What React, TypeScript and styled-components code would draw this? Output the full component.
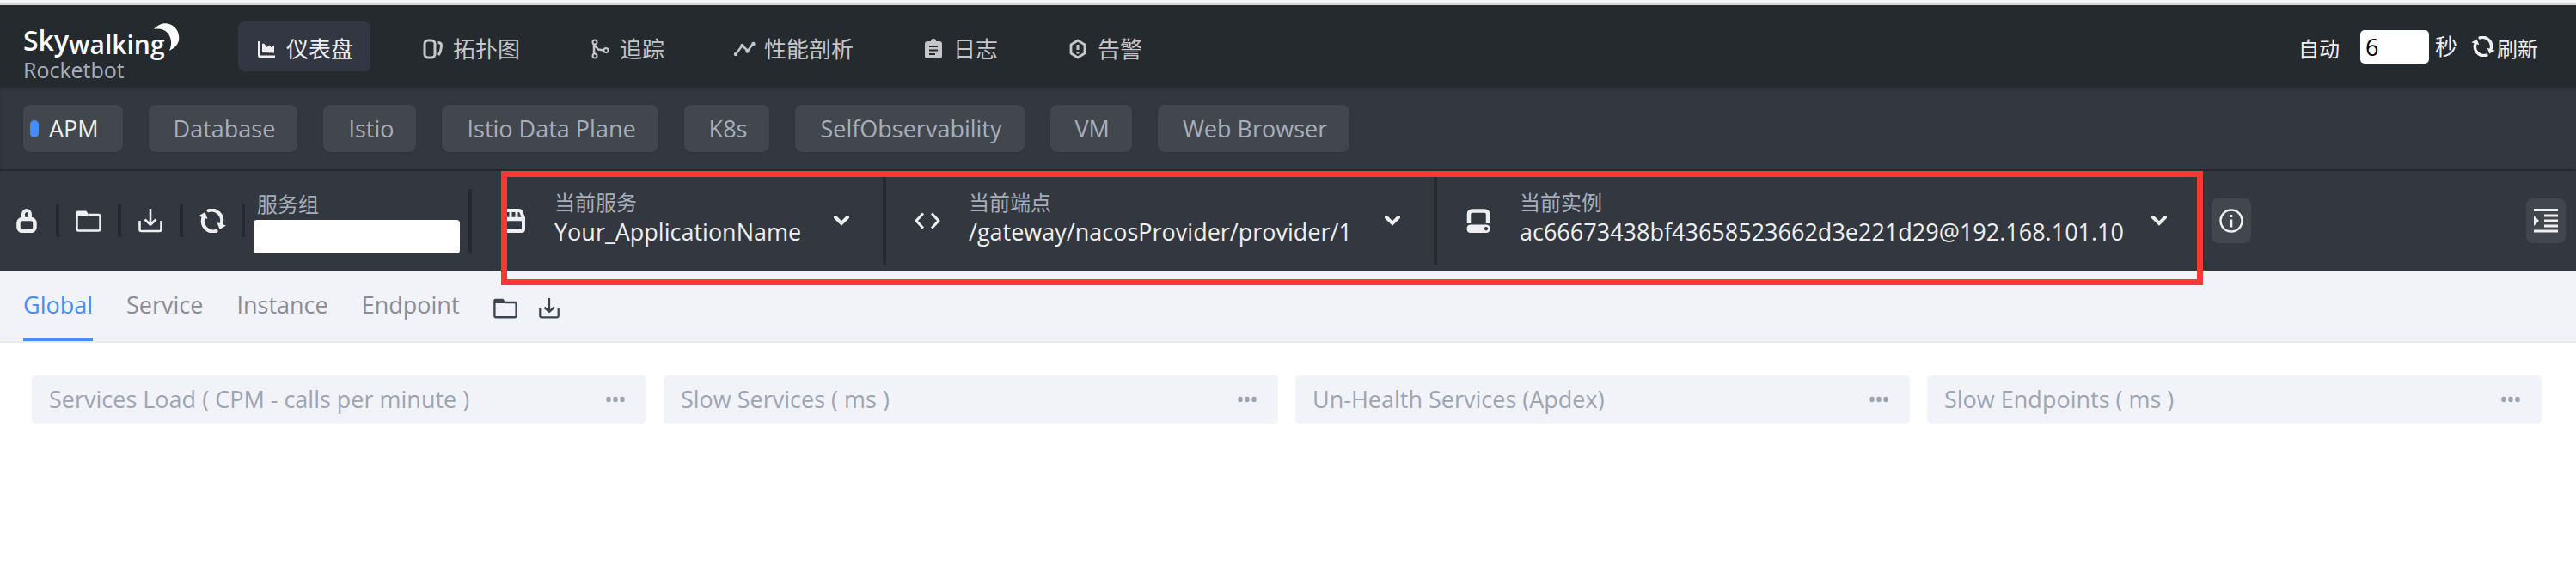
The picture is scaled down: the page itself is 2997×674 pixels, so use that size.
import React from 'react';
import styled, { createGlobalStyle } from 'styled-components';

const GlobalStyle = createGlobalStyle`
  *, *::before, *::after { box-sizing: border-box; }
  body {
    margin: 0;
    background: #fff;
    font-family: 'Open Sans', 'Noto Sans CJK SC', sans-serif;
    font-size: 27px;
    line-height: 36px;
  }
  button, input, select { font: inherit; color: inherit; }
  button { cursor: pointer; }
  svg { display: block; flex: none; }
`;

const Page = styled.div`
  display: flex;
  flex-direction: column;
`;

const BrowserEdge = styled.div`
  height: 6px;
  background: #f5f5f5;
  border-bottom: 2px solid #d3d8d7;
`;

const Header = styled.header`
  display: flex;
  align-items: center;
  height: 96px;
  padding: 0 44px 0 27px;
  background: #252a2f;
  color: #efeff1;
`;

const Brand = styled.a`
  position: relative;
  width: 250px;
  height: 78px;
  padding-top: 10px;
  color: #a7aebb;
  text-decoration: none;
`;

const LogoWord = styled.div`
  display: flex;
  align-items: flex-start;
  height: 44px;
  line-height: 44px;
  font-weight: 600;
  color: #fff;
`;

const LogoBig = styled.span`
  font-size: 32px;
`;

const LogoSmall = styled.span`
  padding-top: 5px;
  font-size: 30px;
`;

const Moon = styled.svg`
  position: absolute;
  left: 152px;
  top: 12px;
`;

const Product = styled.div`
  font-size: 25px;
  line-height: 24px;
`;

const Nav = styled.nav`
  display: flex;
  gap: 40px;
  margin-right: auto;
`;

const NavLink = styled.a<{ $active?: boolean }>`
  display: flex;
  align-items: center;
  gap: 10px;
  height: 58px;
  padding: 5px 20px 0;
  border-radius: 8px;
  background: ${(p) => (p.$active ? '#333743' : 'transparent')};
  color: ${(p) => (p.$active ? '#efeff1' : '#c5c6c8')};
  font-size: 26px;
  text-decoration: none;
  white-space: nowrap;
`;

const AutoLabel = styled.label`
  padding-top: 5px;
  margin-right: 24px;
  font-size: 24px;
`;

const SecondsInput = styled.input`
  width: 80px;
  height: 39px;
  padding: 0 6px;
  border: 0;
  border-radius: 5px;
  background: #fff;
  color: #000;
`;

const Unit = styled.span`
  margin: 0 16px 0 7px;
  font-size: 26px;
`;

const ReloadButton = styled.button`
  display: flex;
  align-items: center;
  gap: 2px;
  padding: 0;
  border: 0;
  background: none;
  font-size: 24px;
`;

const ReloadText = styled.span`
  padding-top: 5px;
`;

const GroupBar = styled.div`
  display: flex;
  align-items: center;
  gap: 30px;
  height: 97px;
  padding: 0 27px;
  background: #333840;
  border-bottom: 2px solid #252a2f;
  box-shadow: inset 0 3px 3px rgba(0, 0, 0, 0.1);
`;

const GroupButton = styled.button<{ $active?: boolean }>`
  display: flex;
  align-items: center;
  gap: 12px;
  height: 55px;
  padding: ${(p) => (p.$active ? '0 28px 0 8px' : '0 26px 0 29px')};
  border: 0;
  border-radius: 8px;
  background: #42464d;
  box-shadow: 0 1px 2px rgba(0, 0, 0, 0.12);
  color: ${(p) => (p.$active ? '#efeff1' : '#a7aebb')};
  white-space: nowrap;
`;

const ActiveMark = styled.span`
  width: 10px;
  height: 20px;
  border-radius: 5px;
  background: #448dfe;
`;

const ToolBar = styled.section`
  position: relative;
  display: flex;
  align-items: center;
  height: 116px;
  padding-right: 12px;
  background: #333840;
  color: #efeff1;
`;

const ToolButton = styled.button`
  display: flex;
  align-items: center;
  justify-content: center;
  height: 38px;
  width: 72px;
  padding: 0;
  border: 0;
  border-right: 4px solid #252a2f;
  background: none;

  &:first-child { width: 69px; padding-right: 4px; }
`;

const GroupField = styled.div`
  display: flex;
  flex-direction: column;
  width: 264px;
  height: 75px;
  padding: 0 10px;
  border-right: 4px solid #252a2f;
`;

const Caption = styled.label`
  padding-left: 4px;
  font-size: 24px;
  line-height: 36px;
  color: #a7aebb;
`;

const GroupInput = styled.input`
  width: 240px;
  height: 39px;
  border: 0;
  border-radius: 4px;
  background: #fff;
  color: #333840;
`;

const Selectors = styled.div`
  position: relative;
  display: flex;
  height: 103px;
`;

const Highlight = styled.div`
  position: absolute;
  left: 34px;
  right: 1px;
  top: -7px;
  bottom: -23px;
  border: 7px solid #fd3736;
  pointer-events: none;
`;

const Selector = styled.div<{ $width: number }>`
  display: flex;
  align-items: center;
  width: ${(p) => p.$width}px;
  padding: 0 39px 0 32px;
  border-right: 4px solid #252a2f;
`;

const SelectorBody = styled.div`
  display: flex;
  flex: 1;
  flex-direction: column;
  min-width: 0;
  margin-left: 32px;
  margin-bottom: 4px;
`;

const SelectorCaption = styled.label`
  font-size: 24px;
  line-height: 30px;
  color: #a7aebb;
`;

const SelectorValue = styled.select`
  appearance: none;
  height: 38px;
  padding: 0;
  border: 0;
  background: none;
  line-height: 38px;
`;

const SquareButton = styled.button`
  display: flex;
  align-items: center;
  justify-content: center;
  width: 46px;
  height: 52px;
  padding: 0;
  border: 0;
  border-radius: 8px;
  background: #42464d;
`;

const InfoSlot = styled.div`
  padding-left: 9px;
  margin-right: auto;
`;

const TabBar = styled.nav`
  display: flex;
  align-items: center;
  gap: 39px;
  height: 84px;
  padding: 0 27px;
  background: #f2f3f9;
  border-bottom: 2px solid #e9eaed;
`;

const Tab = styled.a<{ $active?: boolean }>`
  display: flex;
  align-items: center;
  height: 82px;
  padding-top: 2px;
  border-bottom: 4px solid ${(p) => (p.$active ? '#448dfe' : 'transparent')};
  color: ${(p) => (p.$active ? '#448dfe' : '#8b8d93')};
  text-decoration: none;
`;

const TabTools = styled.div`
  display: flex;
  gap: 24px;
  padding-top: 6px;
`;

const PlainButton = styled.button`
  display: flex;
  padding: 0;
  border: 0;
  background: none;
  color: #3d444f;
`;

const Board = styled.main`
  display: grid;
  grid-template-columns: repeat(4, 1fr);
  gap: 20px;
  padding: 38px 40px 38px 37px;
`;

const Card = styled.article`
  display: flex;
  align-items: center;
  justify-content: space-between;
  height: 56px;
  padding: 0 24px 0 20px;
  border-radius: 5px;
  background: #f2f3f9;
  color: #9da5b2;
`;

const CardTitle = styled.h2`
  margin: 0;
  font-size: 27px;
  font-weight: 400;
`;

const CardMenu = styled(PlainButton)`
  color: #9da5b2;
`;

const Icon = ({
  w = 28,
  h = 28,
  box = '0 0 28 28',
  children,
}: {
  w?: number;
  h?: number;
  box?: string;
  children: React.ReactNode;
}) => (
  <svg
    width={w}
    height={h}
    viewBox={box}
    fill="none"
    stroke="currentColor"
    strokeWidth={3}
    strokeLinejoin="round"
    aria-hidden="true"
  >
    {children}
  </svg>
);

const DashboardIcon = () => (
  <Icon w={26} h={26} box="0 0 26 26">
    <path d="M4.500 4v16.500q0 1.500 1.500 1.500h17" />
    <path d="M8 17V7l2-.5 3.500 4.500 3-2.500 2.500 3 2.500-3 .5.5v8.500z" fill="currentColor" stroke="none" />
  </Icon>
);
const TopologyIcon = () => (
  <Icon w={26} h={26} box="0 0 26 26">
    <rect x="3" y="3" width="12" height="20" rx="4" />
    <path d="M18.500 5.500q4 0 4 3-.3 8-3.500 11.500" />
  </Icon>
);
const TraceIcon = () => (
  <Icon w={26} h={26} box="0 0 26 26">
    <g strokeWidth="2">
      <circle cx="7" cy="5" r="2.500" />
      <circle cx="7" cy="21" r="2.500" />
      <circle cx="20" cy="14.500" r="2.500" />
    </g>
    <path d="M6 7.500V18.500M6 8l5 5.500 6.500 1" strokeWidth="2.500" />
  </Icon>
);
const ProfileIcon = () => (
  <Icon w={26} h={26} box="0 0 26 26">
    <path d="M3 19l7.500-10 6.500 6L23 7" strokeWidth="2.500" />
    <g fill="currentColor" stroke="none">
      <circle cx="3" cy="19" r="2.200" />
      <circle cx="10.500" cy="9" r="2.200" />
      <circle cx="16.500" cy="15.500" r="2.200" />
      <circle cx="23.500" cy="7" r="2.200" />
    </g>
  </Icon>
);
const LogIcon = () => (
  <Icon w={26} h={26} box="0 0 26 26">
    <path
      d="M6 4h4a3 3 0 0 1 6 0h4q3 0 3 3v14q0 3-3 3H6q-3 0-3-3V7q0-3 3-3zM8 9v2h10V9zm0 4.500v2h10v-2zM8 18v2h7v-2z"
      fill="currentColor"
      fillRule="evenodd"
      stroke="none"
    />
  </Icon>
);
const AlarmIcon = () => (
  <Icon w={26} h={26} box="0 0 26 26">
    <path d="M13 3l8 5v10l-8 5-8-5V8z" strokeWidth="2.800" />
    <path d="M13 8v6M13 16v2.500" />
  </Icon>
);
const RefreshIcon = ({ w = 32, h = 28 }: { w?: number; h?: number }) => (
  <svg width={w} height={h} viewBox="0 0 32 28" fill="currentColor" aria-hidden="true">
    <path
      d="M11.500 2.200A12 12 0 0 1 26.500 17.500M20.500 25.800A12 12 0 0 1 5.500 10.500"
      fill="none"
      stroke="currentColor"
      strokeWidth="4"
      strokeLinecap="round"
    />
    <path d="M21.500 16l10.500 3.500-7.500 4.500zM10.500 12L0 8.500 7.500 4z" />
  </svg>
);
const LockIcon = () => (
  <Icon w={24} box="0 0 24 28">
    <path d="M8 12V6.500a4 4.500 0 0 1 8 0V12" strokeWidth="4" />
    <rect x="2.500" y="12" width="19" height="14" rx="4.500" strokeWidth="4.500" />
  </Icon>
);
const FolderIcon = ({ w = 30, h = 25 }: { w?: number; h?: number }) => (
  <Icon w={w} h={h} box="0 0 30 25">
    <path d="M1.500 4.500v17q0 2 2 2h23q2 0 2-2V7q0-2-2-2h-12" strokeWidth="2.500" />
    <path d="M.3 6V2.500Q.3.500 2.500.500h9q1 0 1.700 1.300L14.500 4v2z" fill="currentColor" stroke="none" />
  </Icon>
);
const DownloadIcon = ({ w = 28, h = 28 }: { w?: number; h?: number }) => (
  <Icon w={w} h={h}>
    <path d="M1.500 14v10q0 2 2 2h21q2 0 2-2V14" strokeWidth="2.600" strokeLinejoin="miter" />
    <path d="M14 0v18" strokeWidth="2.600" />
    <path d="M7.500 12.500l6.500 6 6.500-6" />
  </Icon>
);
const ServiceIcon = () => (
  <Icon w={32}>
    <path d="M7.500 2h13q2 0 2.800 2l2.700 6.500v13q0 2.500-2.500 2.500h-19Q2 26 2 23.500v-13L4.700 4q.8-2 2.800-2z" strokeWidth="4" />
    <path d="M2 12h24" strokeWidth="4.500" />
    <path d="M11 2v9M18 2v9" strokeWidth="3" />
  </Icon>
);
const CodeIcon = () => (
  <Icon w={32} h={20} box="0 0 32 20">
    <path d="M11 1.500L3 10l8 8.500M21 1.500l8 8.500-8 8.500" />
  </Icon>
);
const InstanceIcon = () => (
  <Icon w={32}>
    <path d="M3 17V6.500Q3 2.500 7 2.500h14q4 0 4 4V17" strokeWidth="4.500" />
    <path
      d="M5 18.500h18q4.500 0 4.500 4.700t-4.500 4.700H5Q.500 27.900.500 23.200T5 18.500zm18 2.500a2.200 2.200 0 1 0 .01 0z"
      fill="currentColor"
      fillRule="evenodd"
      stroke="none"
    />
  </Icon>
);
const ChevronIcon = () => (
  <Icon w={18} h={12} box="0 0 18 12">
    <path d="M2 2l7 7 7-7" strokeWidth="4" strokeLinecap="round" strokeLinejoin="miter" />
  </Icon>
);
const InfoIcon = () => (
  <Icon>
    <circle cx="14" cy="14" r="12.500" strokeWidth="2.400" />
    <path d="M14 7v3M14 12.500v9" strokeWidth="2.600" />
  </Icon>
);
const PanelIcon = () => (
  <Icon>
    <path d="M0 1.500h28M12 8h16M12 14h16M12 20h16M0 26h28" strokeWidth="3.200" />
    <path d="M0 8v12l6-6z" fill="currentColor" stroke="none" />
  </Icon>
);
const MoreIcon = () => (
  <Icon w={24} h={8} box="0 0 24 8">
    <g fill="currentColor" stroke="none">
      <ellipse cx="4" cy="4" rx="2.800" ry="3.200" />
      <ellipse cx="12" cy="4" rx="2.800" ry="3.200" />
      <ellipse cx="20" cy="4" rx="2.800" ry="3.200" />
    </g>
  </Icon>
);

const navItems = [
  { label: '仪表盘', icon: <DashboardIcon /> },
  { label: '拓扑图', icon: <TopologyIcon /> },
  { label: '追踪', icon: <TraceIcon /> },
  { label: '性能剖析', icon: <ProfileIcon /> },
  { label: '日志', icon: <LogIcon /> },
  { label: '告警', icon: <AlarmIcon /> },
];

const groups = ['APM', 'Database', 'Istio', 'Istio Data Plane', 'K8s', 'SelfObservability', 'VM', 'Web Browser'];

const selectors = [
  { id: 'service', label: '当前服务', value: 'Your_ApplicationName', width: 482, icon: <ServiceIcon /> },
  { id: 'endpoint', label: '当前端点', value: '/gateway/nacosProvider/provider/1', width: 641, icon: <CodeIcon /> },
  {
    id: 'instance',
    label: '当前实例',
    value: 'ac66673438bf43658523662d3e221d29@192.168.101.10',
    width: 892,
    icon: <InstanceIcon />,
  },
];

const tabs = ['Global', 'Service', 'Instance', 'Endpoint'];

const cards = [
  'Services Load ( CPM - calls per minute )',
  'Slow Services ( ms )',
  'Un-Health Services (Apdex)',
  'Slow Endpoints ( ms )',
];

export default function App() {
  return (
    <Page>
      <GlobalStyle />
      <BrowserEdge />
      <Header>
        <Brand href="#">
          <LogoWord>
            <LogoBig>Sky</LogoBig>
            <LogoSmall>walking</LogoSmall>
          </LogoWord>
          <Moon width="30" height="33" viewBox="0 0 30 33" fill="#fff" aria-hidden="true">
            <path d="M0 7C6 0 15-2 22 3c6 4 8 11 7 17-1 5-5 9-11 12C24 19 17 4 0 7z" />
          </Moon>
          <Product>Rocketbot</Product>
        </Brand>
        <Nav>
          {navItems.map((item, i) => (
            <NavLink key={item.label} href="#" $active={i === 0}>
              {item.icon}
              {item.label}
            </NavLink>
          ))}
        </Nav>
        <AutoLabel htmlFor="seconds">自动</AutoLabel>
        <SecondsInput id="seconds" type="text" defaultValue="6" />
        <Unit>秒</Unit>
        <ReloadButton type="button">
          <RefreshIcon w={28} h={24} />
          <ReloadText>刷新</ReloadText>
        </ReloadButton>
      </Header>

      <GroupBar>
        {groups.map((name, i) => (
          <GroupButton key={name} type="button" $active={i === 0}>
            {i === 0 && <ActiveMark />}
            {name}
          </GroupButton>
        ))}
      </GroupBar>

      <ToolBar>
        <ToolButton type="button" aria-label="Lock"><LockIcon /></ToolButton>
        <ToolButton type="button" aria-label="Open"><FolderIcon /></ToolButton>
        <ToolButton type="button" aria-label="Download"><DownloadIcon /></ToolButton>
        <ToolButton type="button" aria-label="Refresh"><RefreshIcon /></ToolButton>
        <GroupField>
          <Caption htmlFor="group">服务组</Caption>
          <GroupInput id="group" type="text" />
        </GroupField>
        <Selectors>
          {selectors.map((s) => (
            <Selector key={s.id} $width={s.width}>
              {s.icon}
              <SelectorBody>
                <SelectorCaption htmlFor={s.id}>{s.label}</SelectorCaption>
                <SelectorValue id={s.id}>
                  <option>{s.value}</option>
                </SelectorValue>
              </SelectorBody>
              <ChevronIcon />
            </Selector>
          ))}
          <Highlight />
        </Selectors>
        <InfoSlot>
          <SquareButton type="button" aria-label="Info"><InfoIcon /></SquareButton>
        </InfoSlot>
        <SquareButton type="button" aria-label="Panel"><PanelIcon /></SquareButton>
      </ToolBar>

      <TabBar>
        {tabs.map((name, i) => (
          <Tab key={name} href="#" $active={i === 0}>{name}</Tab>
        ))}
        <TabTools>
          <PlainButton type="button" aria-label="Open"><FolderIcon w={28} h={24} /></PlainButton>
          <PlainButton type="button" aria-label="Download"><DownloadIcon w={26} h={24} /></PlainButton>
        </TabTools>
      </TabBar>

      <Board>
        {cards.map((title) => (
          <Card key={title}>
            <CardTitle>{title}</CardTitle>
            <CardMenu type="button" aria-label="More"><MoreIcon /></CardMenu>
          </Card>
        ))}
      </Board>
    </Page>
  );
}
